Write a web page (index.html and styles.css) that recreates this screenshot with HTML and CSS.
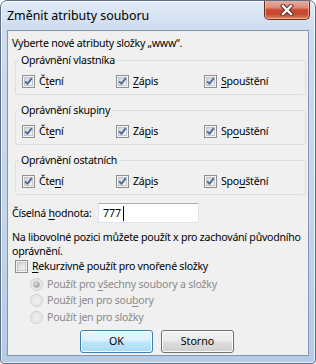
FILE: index.html
```html
<!DOCTYPE html>
<html lang="cs">
<head>
  <meta charset="UTF-8" />
  <title>Změnit atributy souboru</title>
  <link rel="stylesheet" href="styles.css">
</head>
<body>
  <svg width="0" height="0" class="defs">
    <defs>
      <linearGradient id="cbFill" x1="0" y1="0" x2="1" y2="1">
        <stop offset="0" stop-color="#cfd3d8" />
        <stop offset="1" stop-color="#f7f7f7" />
      </linearGradient>
      <radialGradient id="dotFill" cx="0.4" cy="0.35" r="0.7">
        <stop offset="0" stop-color="#e2e2e2" />
        <stop offset="1" stop-color="#9c9c9c" />
      </radialGradient>
      <symbol id="cb-off" viewBox="0 0 13 13">
        <rect x="0.5" y="0.5" width="12" height="12" fill="#f4f4f4" stroke="#8e8f8f" />
        <rect x="2.5" y="2.5" width="8" height="8" fill="url(#cbFill)" stroke="#c3c6cb" stroke-width="1" />
      </symbol>
      <symbol id="cb-on" viewBox="0 0 13 13">
        <use href="#cb-off" />
        <path d="M3.2 6.4 L5.4 8.8 L9.8 3.2" fill="none" stroke="#4f6a9a" stroke-width="1.9" stroke-linejoin="round" />
      </symbol>
      <symbol id="rb-off" viewBox="0 0 13 13">
        <circle cx="6.5" cy="6.5" r="6" fill="#f2f2f2" stroke="#c9c9c9" />
        <circle cx="6.5" cy="6.5" r="4.5" fill="#ececec" stroke="#e0e0e0" />
      </symbol>
      <symbol id="rb-on" viewBox="0 0 13 13">
        <use href="#rb-off" />
        <circle cx="6.5" cy="6.5" r="3" fill="url(#dotFill)" stroke="#a6a6a6" stroke-width="0.6" />
      </symbol>
    </defs>
  </svg>

  <div class="window">
    <div class="titlebar">
      <span class="title">Změnit atributy souboru</span>
      <div class="close">
        <svg width="14" height="12" viewBox="0 0 14 12">
          <path d="M3 2 L11 10 M11 2 L3 10" stroke="#5a2a22" stroke-width="4.4" stroke-linecap="square" />
          <path d="M3 2 L11 10 M11 2 L3 10" stroke="#fff" stroke-width="2.4" stroke-linecap="square" />
        </svg>
      </div>
    </div>

    <div class="client">
      <p class="intro">Vyberte nové atributy složky „www“.</p>

      <fieldset class="group">
        <legend>Oprávnění vlastníka</legend>
        <div class="perms">
          <label class="check"><svg class="cb"><use href="#cb-on" /></svg><span>Č<u>t</u>ení</span></label>
          <label class="check"><svg class="cb"><use href="#cb-on" /></svg><span><u>Z</u>ápis</span></label>
          <label class="check"><svg class="cb"><use href="#cb-on" /></svg><span><u>S</u>pouštění</span></label>
        </div>
      </fieldset>

      <fieldset class="group">
        <legend>Oprávnění skupiny</legend>
        <div class="perms">
          <label class="check"><svg class="cb"><use href="#cb-on" /></svg><span>Čt<u>e</u>ní</span></label>
          <label class="check"><svg class="cb"><use href="#cb-on" /></svg><span>Zá<u>p</u>is</span></label>
          <label class="check"><svg class="cb"><use href="#cb-on" /></svg><span>Sp<u>o</u>uštění</span></label>
        </div>
      </fieldset>

      <fieldset class="group">
        <legend>Oprávnění ostatních</legend>
        <div class="perms">
          <label class="check"><svg class="cb"><use href="#cb-on" /></svg><span>Čte<u>n</u>í</span></label>
          <label class="check"><svg class="cb"><use href="#cb-on" /></svg><span>Záp<u>i</u>s</span></label>
          <label class="check"><svg class="cb"><use href="#cb-on" /></svg><span>Spo<u>u</u>štění</span></label>
        </div>
      </fieldset>

      <div class="octal">
        <label class="octal-label">Číselná <u>h</u>odnota:</label>
        <div class="edit">777<span class="caret"></span></div>
      </div>

      <p class="note">Na libovolné pozici můžete použít x pro zachování původního<br>oprávnění.</p>

      <label class="check recurse"><svg class="cb"><use href="#cb-off" /></svg><span><u>R</u>ekurzivně použít pro vnořené složky</span></label>

      <div class="radios">
        <label class="radio"><svg class="rb"><use href="#rb-on" /></svg><span>Použít pro <u>v</u>šechny soubory a složky</span></label>
        <label class="radio"><svg class="rb"><use href="#rb-off" /></svg><span>Použít jen pro sou<u>b</u>ory</span></label>
        <label class="radio"><svg class="rb"><use href="#rb-off" /></svg><span>Použít <u>j</u>en pro složky</span></label>
      </div>

      <div class="buttons">
        <button class="btn default">OK</button>
        <button class="btn">Storno</button>
      </div>
    </div>
  </div>
</body>
</html>
```

FILE: styles.css
```css
* { box-sizing: border-box; }
body { margin: 0; font-family: "Noto Sans", "Open Sans", sans-serif; font-size: 10.6px; letter-spacing: -0.25px; color: #000; background: #fff; }
.defs { position: absolute; }
u { text-decoration-thickness: 1px; text-underline-offset: 2px; }

.window {
  width: 316px; height: 364px;
  display: flex; flex-direction: column;
  border: 1px solid #5f6f84; border-radius: 7px 7px 4px 4px;
  background: linear-gradient(to bottom, #e1ebf7 0, #cddcef 29px, #c2d5eb 60%, #b5cbe5 100%);
  box-shadow: inset 0 0 0 1px rgba(255, 255, 255, 0.65);
  overflow: hidden;
}
.titlebar { height: 29px; display: flex; align-items: flex-start; }
.title { padding: 7px 0 0 6px; line-height: 15px; font-size: 12.4px; letter-spacing: 0; }
.close {
  margin: -1px 5px 0 auto; width: 46px; height: 20px;
  display: flex; align-items: center; justify-content: center;
  border: 1px solid #6e2b20; border-top: 0; border-radius: 0 0 5px 5px;
  background: linear-gradient(to bottom, #eab3a6 0, #dc8b78 40%, #c64a33 52%, #c9492e 75%, #dc8a66 100%);
  box-shadow: inset 0 0 0 1px rgba(255, 210, 200, 0.55);
}

.client {
  height: 326px; margin: 0 6px 0 6px;
  background: #f0f0f0; border: 1px solid #8497b0;
  padding: 5px 2px 0 4px;
  white-space: nowrap;
}
.intro { margin: 0 0 2px; line-height: 15px; }

.group {
  margin: 0 0 8px 3px; padding: 6px 6px 5px;
  border: 1px solid #d5dfe5; border-radius: 3px;
}
.group legend { padding: 0 2px; margin-left: -3px; line-height: 15px; }
.perms { display: grid; grid-template-columns: 94px 88px 1fr; }
.check, .radio { display: flex; align-items: center; gap: 4px; height: 15px; line-height: 15px; }
.cb, .rb { width: 13px; height: 13px; flex: none; }

.octal { display: flex; align-items: center; height: 20px; }
.octal-label { width: 86px; }
.edit {
  width: 101px; height: 20px; padding: 0 3px 0 4px;
  display: flex; align-items: center;
  background: #fff;
  border: 1px solid #e2e3ea; border-top-color: #abadb3;
  letter-spacing: 0;
}
.caret { width: 1px; height: 15px; background: #000; margin-left: 2px; }

.note { margin: 7px 0 0; line-height: 14px; }
.recurse { height: 16px; margin-left: 3px; }
.radios { margin: 2px 0 0 18px; color: #8a8a8a; }
.radio { height: 16.5px; }

.buttons { display: flex; justify-content: center; gap: 8px; margin-top: 4px; padding-right: 4px; }
.btn {
  width: 73px; height: 23px; padding: 0;
  font: inherit; color: #000;
  border: 1px solid #707070; border-radius: 3px;
  background: linear-gradient(to bottom, #f2f2f2 0, #ebebeb 48%, #dddddd 52%, #cfcfcf 100%);
  box-shadow: inset 0 0 0 1px #fcfcfc;
}
.btn.default {
  border-color: #3c7fb1;
  background: linear-gradient(to bottom, #eaf6fd 0, #d9f0fc 48%, #bee6fd 52%, #a7d9f5 100%);
}
```
